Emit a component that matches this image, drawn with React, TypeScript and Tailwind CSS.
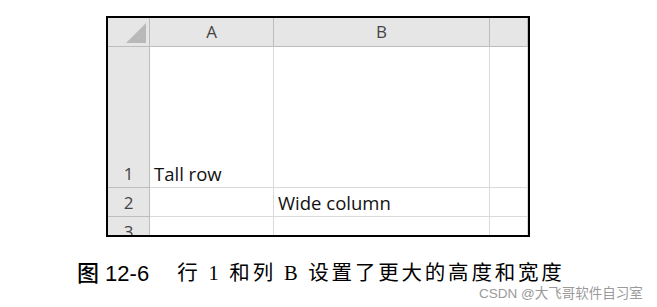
const hdr = "bg-[#e6e6e6] border-r border-b border-[#bdbdbd] flex items-center justify-center text-[#444] text-[17px]";
const rowHdr = "bg-[#e6e6e6] border-r border-b border-[#bdbdbd] flex items-end justify-center text-[#444] text-[17px] leading-[26px]";
const cell = "border-r border-b border-[#dadada] flex items-end px-[4px] text-[18.5px] text-[#111] leading-[26px]";

export default function App() {
  return (
    <div className="w-[657px] h-[307px] bg-white relative" style={{ fontFamily: "'Open Sans', 'Noto Sans', sans-serif" }}>
      <div className="pt-[16px] pl-[106px]">
        <div className="w-[424px] h-[221px] border-2 border-black overflow-hidden">
          <div className="grid grid-cols-[42px_124px_216px_1fr] grid-rows-[29px_141px_29px_29px]">
            <div className="bg-[#e6e6e6] border-r border-b border-[#bdbdbd] flex items-end justify-end p-[3px]">
              <svg width="20" height="20" viewBox="0 0 20 20">
                <polygon points="20,0 20,20 0,20" fill="#b9b9b9" />
              </svg>
            </div>
            <div className={hdr}>A</div>
            <div className={hdr}>B</div>
            <div className={hdr}></div>

            <div className={rowHdr}>1</div>
            <div className={cell}>Tall row</div>
            <div className={cell}></div>
            <div className={cell}></div>

            <div className={rowHdr}>2</div>
            <div className={cell}></div>
            <div className={cell}>Wide column</div>
            <div className={cell}></div>

            <div className={rowHdr}>3</div>
            <div className={cell}></div>
            <div className={cell}></div>
            <div className={cell}></div>
          </div>
        </div>
      </div>
      <div className="flex items-center pl-[77px] pt-[20px] text-black">
        <span className="text-[22px] font-medium" style={{ fontFamily: "'Liberation Sans', 'Noto Sans CJK SC', sans-serif" }}>图 12-6</span>
        <span className="ml-[28px] text-[20.5px] tracking-[2.8px]" style={{ fontFamily: "'Liberation Serif', 'Noto Sans CJK SC', serif" }}>行 1 和列 B 设置了更大的高度和宽度</span>
      </div>
      <div className="absolute left-[479px] top-[284px] text-[13.5px] text-[#9a9a9a]" style={{ fontFamily: "'Liberation Sans', 'Noto Sans CJK SC', sans-serif" }}>CSDN @大飞哥软件自习室</div>
    </div>
  );
}
